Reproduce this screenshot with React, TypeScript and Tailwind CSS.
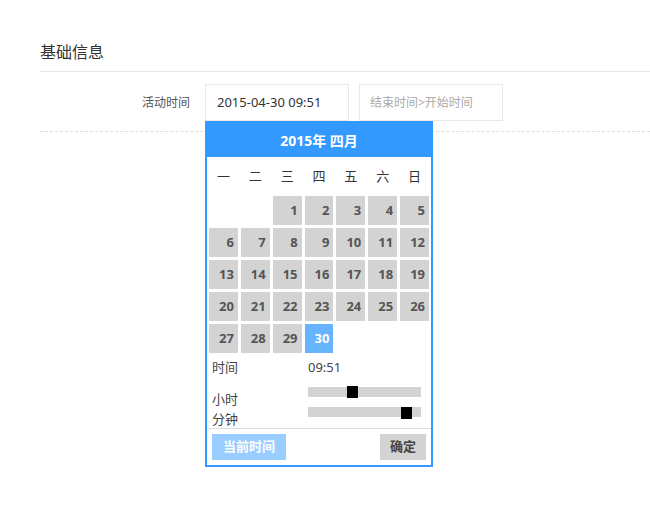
import React from "react";

const weekdays = ["一", "二", "三", "四", "五", "六", "日"];

export default function App() {
  const days: (number | null)[] = [null, null];
  for (let i = 1; i <= 30; i++) days.push(i);

  return (
    <div className="w-[650px] h-[526px] bg-white font-['Noto_Sans','Noto_Sans_CJK_SC',sans-serif] text-[#333]">
      <div className="pl-[40px] pt-[40px]">
        <div className="border-b border-[#e6e6e6] pb-[7px]">
          <h2 className="text-[16px] leading-[24px] text-[#333]">基础信息</h2>
        </div>
        <div className="relative mt-[12px]">
          <div className="flex items-center">
            <label className="w-[150px] text-right text-[12px] text-[#555]">活动时间</label>
            <div className="ml-[15px] w-[144px] h-[37px] border border-[#e8e8e8] flex items-center pl-[11px] text-[13px] text-[#333]">
              2015-04-30 09:51
            </div>
            <div className="ml-[10px] w-[144px] h-[37px] border border-[#e8e8e8] flex items-center pl-[10px] text-[12px] text-[#aaa]">
              结束时间&gt;开始时间
            </div>
          </div>
          <div className="mt-[10px] border-t border-dashed border-[#dddddd]" />

          <div className="absolute left-[165px] top-[37px] w-[228px] border-2 border-[#3399ff] bg-white">
            <div className="h-[34px] bg-[#3399ff] flex items-center justify-center text-white font-bold text-[14px]">
              2015年 四月
            </div>
            <div className="grid grid-cols-7 gap-x-[3px] px-[2px] h-[39px] items-center">
              {weekdays.map((w) => (
                <div key={w} className="text-center text-[13px] text-[#333]">
                  {w}
                </div>
              ))}
            </div>
            <div className="grid grid-cols-7 gap-[3px] px-[2px]">
              {days.map((d, i) =>
                d === null ? (
                  <div key={"e" + i} className="h-[29px]" />
                ) : (
                  <div
                    key={d}
                    className={
                      d === 30
                        ? "h-[29px] bg-[#66b3ff] text-white font-bold text-[13px] flex items-center justify-end pr-[4px]"
                        : "h-[29px] bg-[#d3d3d3] text-[#555] font-bold text-[13px] flex items-center justify-end pr-[4px]"
                    }
                  >
                    {d}
                  </div>
                )
              )}
            </div>
            <div className="h-[75px] pt-[4px] flex">
              <div className="w-[101px] pl-[5px] text-[13px] text-[#444]">
                <div className="leading-[20px]">时间</div>
                <div className="leading-[20px] mt-[12px]">小时</div>
                <div className="leading-[18px] mt-[1px]">分钟</div>
              </div>
              <div className="flex-1">
                <div className="leading-[20px] text-[13px] text-[#444]">09:51</div>
                <div className="relative mt-[10px] w-[113px] h-[10px] bg-[#d3d3d3]">
                  <div className="absolute left-[39px] top-[-1px] w-[11px] h-[12px] bg-black" />
                </div>
                <div className="relative mt-[10px] w-[113px] h-[10px] bg-[#d3d3d3]">
                  <div className="absolute left-[93px] top-[0px] w-[11px] h-[12px] bg-black" />
                </div>
              </div>
            </div>
            <div className="border-t border-[#dddddd] flex justify-between px-[5px] pt-[5px] pb-[5px]">
              <button className="w-[74px] h-[26px] bg-[#99ccff] text-white font-bold text-[13px]">
                当前时间
              </button>
              <button className="w-[46px] h-[26px] bg-[#d3d3d3] text-[#444] font-bold text-[13px]">
                确定
              </button>
            </div>
          </div>
        </div>
      </div>
    </div>
  );
}
